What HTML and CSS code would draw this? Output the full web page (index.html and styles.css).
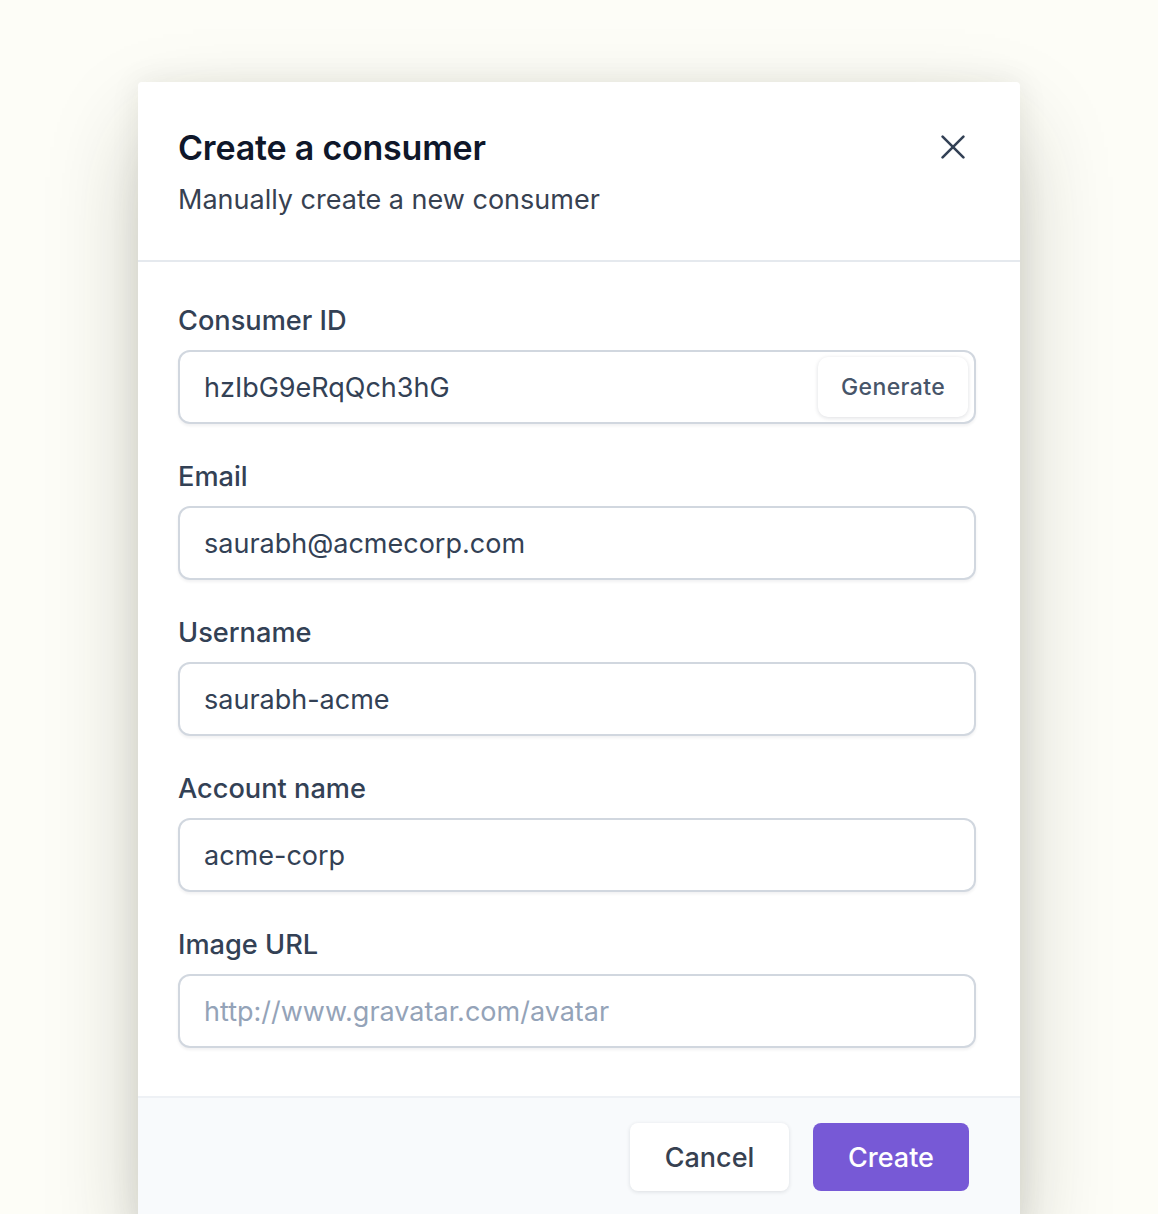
FILE: index.html
```html
<!DOCTYPE html>
<html lang="en">
<head>
<meta charset="utf-8">
<title>Create a consumer</title>
<link rel="stylesheet" href="styles.css">
</head>
<body>
<div class="page">
  <div class="modal">
    <div class="modal-header">
      <div class="header-text">
        <h1 class="title">Create a consumer</h1>
        <p class="subtitle">Manually create a new consumer</p>
      </div>
      <button class="close" aria-label="Close">
        <svg width="24" height="24" viewBox="0 0 24 24" fill="none" stroke="currentColor" stroke-width="2.6" stroke-linecap="round"><path d="M1.6 1.6L22.4 22.4M22.4 1.6L1.6 22.4"/></svg>
      </button>
    </div>
    <div class="modal-body">
      <div class="field">
        <label class="label">Consumer ID</label>
        <div class="input with-action">
          <span class="value">hzIbG9eRqQch3hG</span>
          <button class="generate">Generate</button>
        </div>
      </div>
      <div class="field">
        <label class="label">Email</label>
        <div class="input"><span class="value">saurabh@acmecorp.com</span></div>
      </div>
      <div class="field">
        <label class="label">Username</label>
        <div class="input"><span class="value">saurabh-acme</span></div>
      </div>
      <div class="field">
        <label class="label">Account name</label>
        <div class="input"><span class="value">acme-corp</span></div>
      </div>
      <div class="field">
        <label class="label">Image URL</label>
        <div class="input"><span class="value placeholder">http://www.gravatar.com/avatar</span></div>
      </div>
    </div>
    <div class="modal-footer">
      <button class="btn btn-secondary">Cancel</button>
      <button class="btn btn-primary">Create</button>
    </div>
  </div>
</div>
</body>
</html>
```

FILE: styles.css
```css
* { box-sizing: border-box; }
html, body { margin: 0; padding: 0; }
body {
  background: #fdfdf7;
  font-family: Inter, "Noto Sans", "Liberation Sans", sans-serif;
  overflow: hidden;
  height: 1214px;
}
.page {
  padding-top: 82px;
  padding-left: 138px;
}
.modal {
  width: 882px;
  background: #ffffff;
  border-radius: 4px 4px 0 0;
  box-shadow: 0 40px 90px -10px rgba(40, 40, 20, 0.28), 0 0 30px rgba(40, 40, 20, 0.08);
}
.modal-header {
  display: flex;
  justify-content: space-between;
  align-items: flex-start;
  padding: 42px 44px 40px 40px;
  border-bottom: 2px solid #e5e9ee;
}
.title {
  margin: 0;
  font-size: 34px;
  line-height: 48px;
  font-weight: 600;
  color: #0f172a;
  letter-spacing: -0.2px;
}
.subtitle {
  margin: 8px 0 0;
  font-size: 27px;
  line-height: 40px;
  color: #374151;
  font-weight: 400;
}
.close {
  border: 0;
  background: transparent;
  padding: 0;
  margin-top: 11px;
  margin-right: 11px;
  color: #334155;
  width: 24px;
  height: 24px;
  display: flex;
  cursor: pointer;
}
.modal-body {
  display: flex;
  flex-direction: column;
  gap: 33px;
  padding: 39px 44px 48px 40px;
}
.field {
  display: flex;
  flex-direction: column;
  gap: 9px;
}
.label {
  font-size: 27.2px;
  line-height: 40px;
  font-weight: 500;
  color: #334155;
}
.input {
  height: 74px;
  border: 2px solid #d1d7df;
  border-radius: 12px;
  box-shadow: 0 2px 3px rgba(15, 23, 42, 0.06);
  display: flex;
  align-items: center;
  padding: 0 6px 0 24px;
  background: #fff;
}
.value {
  font-size: 27px;
  color: #334155;
  flex: 1;
}
.placeholder { color: #94a3b8; }
.generate {
  height: 60px;
  width: 150px;
  border: 0;
  border-radius: 10px;
  background: #fff;
  box-shadow: 0 1px 4px rgba(15, 23, 42, 0.14);
  font-family: inherit;
  font-size: 23px;
  font-weight: 500;
  color: #475569;
  letter-spacing: 0.4px;
}
.modal-footer {
  display: flex;
  justify-content: flex-end;
  gap: 24px;
  padding: 25px 51px 40px 40px;
  background: #f8fafc;
  border-top: 2px solid #eef1f5;
}
.btn {
  height: 68px;
  border-radius: 8px;
  border: 0;
  font-family: inherit;
  font-size: 27px;
  font-weight: 500;
  cursor: pointer;
}
.btn-secondary {
  width: 159px;
  background: #fff;
  color: #374151;
  box-shadow: 0 1px 4px rgba(15, 23, 42, 0.12);
}
.btn-primary {
  width: 156px;
  background: #7759d6;
  color: #fff;
}
```
